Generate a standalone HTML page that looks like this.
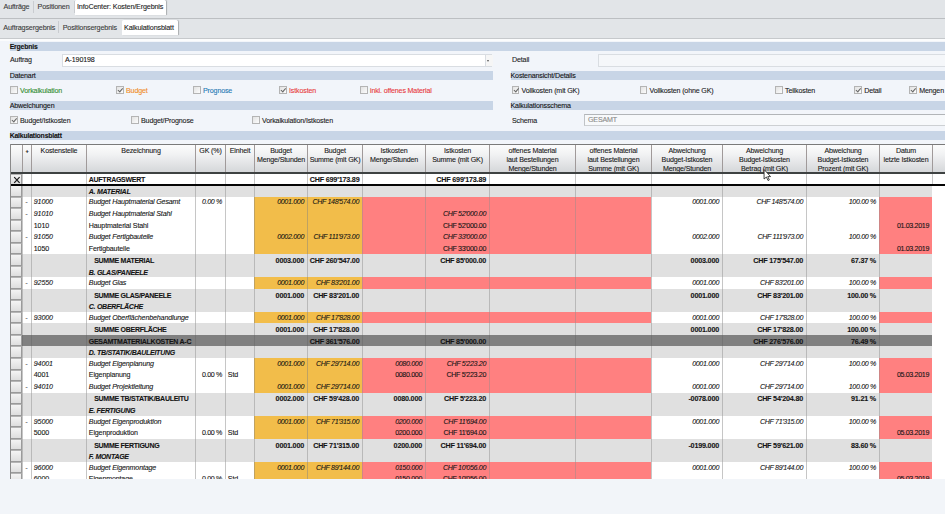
<!DOCTYPE html>
<html><head><meta charset="utf-8">
<style>
html,body{margin:0;padding:0}
body{width:945px;height:514px;overflow:hidden;position:relative;background:#f2f5fa;font-family:"Liberation Sans",sans-serif;font-size:7.1px;letter-spacing:-0.15px;color:#141414;-webkit-text-stroke:0.1px currentColor}
.abs{position:absolute}
#tb1{left:0;top:0;width:945px;height:18px;background:#e2e5e8}
#ln1{left:0;top:17.5px;width:945px;height:1.5px;background:#bcbfc2}
#tb2{left:0;top:18.5px;width:945px;height:19px;background:#e2e5e8}
#ln2{left:0;top:37.5px;width:945px;height:1.3px;background:#c6c9cc}
#ln2b{left:0;top:39px;width:945px;height:1.5px;background:#fbfcfd}
.tab{position:absolute;white-space:nowrap;color:#3a3a3a;font-size:7.2px;line-height:10px}
.tabact{position:absolute;background:#fff;border-radius:1.5px 1.5px 0 0;box-shadow:1px 0 1px rgba(0,0,0,.25)}
.tsep{position:absolute;width:1px;background:#c9ccd0}
.band{position:absolute;height:8.8px;background:#c8d5e6;font-size:7.1px;line-height:10.2px;white-space:nowrap;color:#111}
.band b{font-weight:bold;font-size:6.9px;letter-spacing:-0.2px}
.lbl{position:absolute;white-space:nowrap;font-size:7.1px;line-height:10px;color:#1a1a1a}
.inp{position:absolute;background:#fff;border:1px solid #d9dde2;box-sizing:border-box;font-size:7.1px;line-height:10px;white-space:nowrap}
.cb{position:absolute;width:7.6px;height:7.6px;box-sizing:border-box;border:1px solid #b4b4b4;background:linear-gradient(135deg,#e2e2e2,#fcfcfc)}
.cb.on:after{content:"";position:absolute;left:2px;top:0.2px;width:1.6px;height:3.6px;border:solid #666;border-width:0 0.9px 0.9px 0;transform:rotate(40deg)}
/* table */
#thead{position:absolute;left:0;top:144px;width:945px;height:29.5px}
.h{position:absolute;top:0;height:29.5px;box-sizing:border-box;border-left:1px solid #a09a9a;background:linear-gradient(#fdfdfd 0%,#f1f2f3 35%,#d2d4d7 100%);text-align:center;font-size:7.1px;line-height:8.85px;padding-top:3.1px;white-space:nowrap;overflow:hidden;color:#181818}
.row{position:absolute;left:0;width:945px}
.c{position:absolute;top:0;height:100%;box-sizing:border-box;border-left:1px solid #c6c6c6;white-space:nowrap;overflow:hidden;font-size:7.1px;line-height:11.5px;padding:0.9px 3px 0 1.8px}
.ar{text-align:right}.al{text-align:left}
.w{background:#fff}
.x{background:#fff;border-left-color:#fff}
.k-aw .x{border-left-color:#c6c6c6}
.g{background:#e0e0e0;border-left-color:#b9b9b9}
.d{background:#808080;border-left-color:#747474}
.o{background:#f2bd4a;border-left-color:#bfa262}
.r{background:#ff8080;border-left-color:#cf8585}
.k-bud .c{font-style:italic}
.k-sum .c,.k-tot .c,.k-aw .c{font-weight:bold;font-size:6.9px;letter-spacing:-0.2px}
.k-grp .c{font-weight:bold;font-style:italic;font-size:6.9px;letter-spacing:-0.2px}
.k-aw .c{line-height:11.5px}
.k-sum .ind{padding-left:7.2px}
.c.n{letter-spacing:-0.34px}
.k-sum .c.n,.k-tot .c.n,.k-aw .c.n{font-size:7.2px;letter-spacing:-0.2px}
.k-sum .c.al,.k-tot .c.al,.k-aw .c.al,.k-grp .c.al{font-size:7px;letter-spacing:-0.27px}
.rh{position:absolute;top:0;height:100%;box-sizing:border-box;border:1px solid #9a9a9a;border-top-color:#b5b5b5;background:linear-gradient(#f4f4f4,#dedede)}
</style></head><body>
<div id="tb1" class="abs"></div><div id="ln1" class="abs"></div>
<div id="tb2" class="abs"></div><div id="ln2" class="abs"></div><div id="ln2b" class="abs"></div>

<div class="tabact" style="left:75px;top:0;width:90.5px;height:14.5px"></div>
<div class="tab" style="left:3.5px;top:2px">Aufträge</div>
<div class="tsep" style="left:33px;top:1px;height:12px"></div>
<div class="tab" style="left:37.5px;top:2px">Positionen</div>
<div class="tsep" style="left:73.5px;top:1px;height:12px"></div>
<div class="tab" style="left:77px;top:2px;color:#222">InfoCenter: Kosten/Ergebnis</div>

<div class="tabact" style="left:121.5px;top:20px;width:56px;height:14.5px"></div>
<div class="tab" style="left:3.3px;top:22.5px">Auftragsergebnis</div>
<div class="tsep" style="left:58px;top:21px;height:12px"></div>
<div class="tab" style="left:62.7px;top:22.5px">Positionsergebnis</div>
<div class="tab" style="left:124px;top:22.5px;color:#222">Kalkulationsblatt</div>

<div class="band" style="left:9.7px;top:42px;width:936px"><b>Ergebnis</b></div>
<div class="lbl" style="left:10px;top:54.8px">Auftrag</div>
<div class="inp" style="left:62px;top:54.3px;width:430px;height:12.3px;padding-left:2px;line-height:10.5px">A-190198</div>
<div class="abs" style="left:484.5px;top:55px;width:7px;height:10.5px;border-left:1px solid #d9dde2;background:#f6f6f6"></div>
<div class="abs" style="left:486.5px;top:59.5px;width:0;height:0;border:1.5px solid transparent;border-top:2px solid #555"></div>
<div class="lbl" style="left:512px;top:54.8px">Detail</div>
<div class="inp" style="left:598px;top:54.3px;width:360px;height:12.3px;background:#f5f7fa"></div>

<div class="band" style="left:9.7px;top:71.2px;width:483px">Datenart</div>
<div class="band" style="left:510.5px;top:71.2px;width:440px">Kostenansicht/Details</div>

<i class="cb" style="left:10px;top:86.3px"></i><div class="lbl" style="left:20px;top:85.5px;color:#2e8b2e">Vorkalkulation</div>
<i class="cb on" style="left:116px;top:86.3px"></i><div class="lbl" style="left:126px;top:85.5px;color:#f08a1c">Budget</div>
<i class="cb" style="left:193px;top:86.3px"></i><div class="lbl" style="left:203px;top:85.5px;color:#1e78b4">Prognose</div>
<i class="cb on" style="left:279px;top:86.3px"></i><div class="lbl" style="left:289px;top:85.5px;color:#e8383a">Istkosten</div>
<i class="cb" style="left:360px;top:86.3px"></i><div class="lbl" style="left:370px;top:85.5px;color:#e8383a">inkl. offenes Material</div>

<i class="cb on" style="left:511.5px;top:86.3px"></i><div class="lbl" style="left:521.5px;top:85.5px">Vollkosten (mit GK)</div>
<i class="cb" style="left:639.5px;top:86.3px"></i><div class="lbl" style="left:649.5px;top:85.5px">Vollkosten (ohne GK)</div>
<i class="cb" style="left:775px;top:86.3px"></i><div class="lbl" style="left:785px;top:85.5px">Teilkosten</div>
<i class="cb on" style="left:854px;top:86.3px"></i><div class="lbl" style="left:864.2px;top:85.5px">Detail</div>
<i class="cb on" style="left:909px;top:86.3px"></i><div class="lbl" style="left:919.2px;top:85.5px">Mengen</div>

<div class="band" style="left:9.7px;top:101.2px;width:483px">Abweichungen</div>
<div class="band" style="left:510.5px;top:101.2px;width:440px">Kalkulationsschema</div>

<i class="cb on" style="left:10px;top:116.3px"></i><div class="lbl" style="left:20px;top:115.5px">Budget/Istkosten</div>
<i class="cb" style="left:131px;top:116.3px"></i><div class="lbl" style="left:141px;top:115.5px">Budget/Prognose</div>
<i class="cb" style="left:252px;top:116.3px"></i><div class="lbl" style="left:262px;top:115.5px">Vorkalkulation/Istkosten</div>
<div class="lbl" style="left:512px;top:115.5px">Schema</div>
<div class="inp" style="left:584px;top:113.5px;width:380px;height:12.5px;padding-left:3px;color:#8a8a8a;border-color:#b2b5b8 #d0d3d6 #cdd0d3 #c0c3c6;background:#f7f9fb">GESAMT</div>

<div class="band" style="left:9.7px;top:131.2px;width:936px"><b>Kalkulationsblatt</b></div>

<!-- table -->
<div class="abs" style="left:10px;top:143.5px;width:935px;height:335px;background:#fff"></div>
<div id="thead">
<span class="h" style="left:10px;width:12px"></span>
<span class="h" style="left:22px;width:9px"><b style="font-size:5.5px">+</b></span>
<span class="h" style="left:31px;width:55px">Kostenstelle</span>
<span class="h" style="left:86px;width:109px">Bezeichnung</span>
<span class="h" style="left:195px;width:30px">GK (%)</span>
<span class="h" style="left:225px;width:29px">Einheit</span>
<span class="h" style="left:254px;width:53px">Budget<br>Menge/Stunden</span>
<span class="h" style="left:307px;width:55px">Budget<br>Summe (mit GK)</span>
<span class="h" style="left:362px;width:63px">Istkosten<br>Menge/Stunden</span>
<span class="h" style="left:425px;width:64px">Istkosten<br>Summe (mit GK)</span>
<span class="h" style="left:489px;width:86px">offenes Material<br>laut Bestellungen<br>Menge/Stunden</span>
<span class="h" style="left:575px;width:76px">offenes Material<br>laut Bestellungen<br>Summe (mit GK)</span>
<span class="h" style="left:651px;width:71px">Abweichung<br>Budget-Istkosten<br>Menge/Stunden</span>
<span class="h" style="left:722px;width:84px">Abweichung<br>Budget-Istkosten<br>Betrag (mit GK)</span>
<span class="h" style="left:806px;width:73px">Abweichung<br>Budget-Istkosten<br>Prozent (mit GK)</span>
<span class="h" style="left:879px;width:53px">Datum<br>letzte Istkosten</span>
<span class="h" style="left:932px;width:28px"></span>
</div>
<div class="row k-aw" style="top:173.5px;height:11.5px">
<i class="rh" style="left:10px;width:12px"></i>
<span class="c w" style="left:22px;width:9px;text-align:center"></span>
<span class="c w al" style="left:31px;width:55px"></span>
<span class="c w al" style="left:86px;width:109px">AUFTRAGSWERT</span>
<span class="c w ar n" style="left:195px;width:30px"></span>
<span class="c w al" style="left:225px;width:29px"></span>
<span class="c w ar n" style="left:254px;width:53px"></span>
<span class="c w ar n" style="left:307px;width:55px">CHF 699'173.89</span>
<span class="c w ar n" style="left:362px;width:63px"></span>
<span class="c w ar n" style="left:425px;width:64px">CHF 699'173.89</span>
<span class="c w ar n" style="left:489px;width:86px"></span>
<span class="c w ar n" style="left:575px;width:76px"></span>
<span class="c w ar n" style="left:651px;width:71px"></span>
<span class="c w ar n" style="left:722px;width:84px"></span>
<span class="c w ar n" style="left:806px;width:73px"></span>
<span class="c w ar n" style="left:879px;width:53px"></span>
<span class="c x al" style="left:932px;width:28px"></span>
</div>
<div class="row k-grp" style="top:185px;height:11.57px">
<i class="rh" style="left:10px;width:12px"></i>
<span class="c g" style="left:22px;width:9px;text-align:center"></span>
<span class="c g al" style="left:31px;width:55px"></span>
<span class="c g al" style="left:86px;width:109px">A. MATERIAL</span>
<span class="c g ar n" style="left:195px;width:30px"></span>
<span class="c g al" style="left:225px;width:29px"></span>
<span class="c g ar n" style="left:254px;width:53px"></span>
<span class="c g ar n" style="left:307px;width:55px"></span>
<span class="c g ar n" style="left:362px;width:63px"></span>
<span class="c g ar n" style="left:425px;width:64px"></span>
<span class="c g ar n" style="left:489px;width:86px"></span>
<span class="c g ar n" style="left:575px;width:76px"></span>
<span class="c g ar n" style="left:651px;width:71px"></span>
<span class="c g ar n" style="left:722px;width:84px"></span>
<span class="c g ar n" style="left:806px;width:73px"></span>
<span class="c g ar n" style="left:879px;width:53px"></span>
<span class="c x al" style="left:932px;width:28px"></span>
</div>
<div class="row k-bud" style="top:196.55px;height:11.55px">
<i class="rh" style="left:10px;width:12px"></i>
<span class="c w" style="left:22px;width:9px;text-align:center">-</span>
<span class="c w al" style="left:31px;width:55px">91000</span>
<span class="c w al" style="left:86px;width:109px">Budget Hauptmaterial Gesamt</span>
<span class="c w ar n" style="left:195px;width:30px">0.00 %</span>
<span class="c w al" style="left:225px;width:29px"></span>
<span class="c o ar n" style="left:254px;width:53px">0001.000</span>
<span class="c o ar n" style="left:307px;width:55px">CHF 148'574.00</span>
<span class="c r ar n" style="left:362px;width:63px"></span>
<span class="c r ar n" style="left:425px;width:64px"></span>
<span class="c r ar n" style="left:489px;width:86px"></span>
<span class="c r ar n" style="left:575px;width:76px"></span>
<span class="c w ar n" style="left:651px;width:71px">0001.000</span>
<span class="c w ar n" style="left:722px;width:84px">CHF 148'574.00</span>
<span class="c w ar n" style="left:806px;width:73px">100.00 %</span>
<span class="c r ar n" style="left:879px;width:53px"></span>
<span class="c x al" style="left:932px;width:28px"></span>
</div>
<div class="row k-bud" style="top:208.08px;height:11.55px">
<i class="rh" style="left:10px;width:12px"></i>
<span class="c w" style="left:22px;width:9px;text-align:center">-</span>
<span class="c w al" style="left:31px;width:55px">91010</span>
<span class="c w al" style="left:86px;width:109px">Budget Hauptmaterial Stahl</span>
<span class="c w ar n" style="left:195px;width:30px"></span>
<span class="c w al" style="left:225px;width:29px"></span>
<span class="c o ar n" style="left:254px;width:53px"></span>
<span class="c o ar n" style="left:307px;width:55px"></span>
<span class="c r ar n" style="left:362px;width:63px"></span>
<span class="c r ar n" style="left:425px;width:64px">CHF 52'000.00</span>
<span class="c r ar n" style="left:489px;width:86px"></span>
<span class="c r ar n" style="left:575px;width:76px"></span>
<span class="c w ar n" style="left:651px;width:71px"></span>
<span class="c w ar n" style="left:722px;width:84px"></span>
<span class="c w ar n" style="left:806px;width:73px"></span>
<span class="c r ar n" style="left:879px;width:53px"></span>
<span class="c x al" style="left:932px;width:28px"></span>
</div>
<div class="row k-det" style="top:219.61px;height:11.55px">
<i class="rh" style="left:10px;width:12px"></i>
<span class="c w" style="left:22px;width:9px;text-align:center"></span>
<span class="c w al" style="left:31px;width:55px">1010</span>
<span class="c w al" style="left:86px;width:109px">Hauptmaterial Stahl</span>
<span class="c w ar n" style="left:195px;width:30px"></span>
<span class="c w al" style="left:225px;width:29px"></span>
<span class="c o ar n" style="left:254px;width:53px"></span>
<span class="c o ar n" style="left:307px;width:55px"></span>
<span class="c r ar n" style="left:362px;width:63px"></span>
<span class="c r ar n" style="left:425px;width:64px">CHF 52'000.00</span>
<span class="c r ar n" style="left:489px;width:86px"></span>
<span class="c r ar n" style="left:575px;width:76px"></span>
<span class="c w ar n" style="left:651px;width:71px"></span>
<span class="c w ar n" style="left:722px;width:84px"></span>
<span class="c w ar n" style="left:806px;width:73px"></span>
<span class="c r ar n" style="left:879px;width:53px">01.03.2019</span>
<span class="c x al" style="left:932px;width:28px"></span>
</div>
<div class="row k-bud" style="top:231.14px;height:11.55px">
<i class="rh" style="left:10px;width:12px"></i>
<span class="c w" style="left:22px;width:9px;text-align:center">-</span>
<span class="c w al" style="left:31px;width:55px">91050</span>
<span class="c w al" style="left:86px;width:109px">Budget Fertigbauteile</span>
<span class="c w ar n" style="left:195px;width:30px"></span>
<span class="c w al" style="left:225px;width:29px"></span>
<span class="c o ar n" style="left:254px;width:53px">0002.000</span>
<span class="c o ar n" style="left:307px;width:55px">CHF 111'973.00</span>
<span class="c r ar n" style="left:362px;width:63px"></span>
<span class="c r ar n" style="left:425px;width:64px">CHF 33'000.00</span>
<span class="c r ar n" style="left:489px;width:86px"></span>
<span class="c r ar n" style="left:575px;width:76px"></span>
<span class="c w ar n" style="left:651px;width:71px">0002.000</span>
<span class="c w ar n" style="left:722px;width:84px">CHF 111'973.00</span>
<span class="c w ar n" style="left:806px;width:73px">100.00 %</span>
<span class="c r ar n" style="left:879px;width:53px"></span>
<span class="c x al" style="left:932px;width:28px"></span>
</div>
<div class="row k-det" style="top:242.67px;height:11.55px">
<i class="rh" style="left:10px;width:12px"></i>
<span class="c w" style="left:22px;width:9px;text-align:center"></span>
<span class="c w al" style="left:31px;width:55px">1050</span>
<span class="c w al" style="left:86px;width:109px">Fertigbauteile</span>
<span class="c w ar n" style="left:195px;width:30px"></span>
<span class="c w al" style="left:225px;width:29px"></span>
<span class="c o ar n" style="left:254px;width:53px"></span>
<span class="c o ar n" style="left:307px;width:55px"></span>
<span class="c r ar n" style="left:362px;width:63px"></span>
<span class="c r ar n" style="left:425px;width:64px">CHF 33'000.00</span>
<span class="c r ar n" style="left:489px;width:86px"></span>
<span class="c r ar n" style="left:575px;width:76px"></span>
<span class="c w ar n" style="left:651px;width:71px"></span>
<span class="c w ar n" style="left:722px;width:84px"></span>
<span class="c w ar n" style="left:806px;width:73px"></span>
<span class="c r ar n" style="left:879px;width:53px">01.03.2019</span>
<span class="c x al" style="left:932px;width:28px"></span>
</div>
<div class="row k-sum" style="top:254.2px;height:11.55px">
<i class="rh" style="left:10px;width:12px"></i>
<span class="c g" style="left:22px;width:9px;text-align:center"></span>
<span class="c g al" style="left:31px;width:55px"></span>
<span class="c g al ind" style="left:86px;width:109px">SUMME MATERIAL</span>
<span class="c g ar n" style="left:195px;width:30px"></span>
<span class="c g al" style="left:225px;width:29px"></span>
<span class="c g ar n" style="left:254px;width:53px">0003.000</span>
<span class="c g ar n" style="left:307px;width:55px">CHF 260'547.00</span>
<span class="c g ar n" style="left:362px;width:63px"></span>
<span class="c g ar n" style="left:425px;width:64px">CHF 85'000.00</span>
<span class="c g ar n" style="left:489px;width:86px"></span>
<span class="c g ar n" style="left:575px;width:76px"></span>
<span class="c g ar n" style="left:651px;width:71px">0003.000</span>
<span class="c g ar n" style="left:722px;width:84px">CHF 175'547.00</span>
<span class="c g ar n" style="left:806px;width:73px">67.37 %</span>
<span class="c g ar n" style="left:879px;width:53px"></span>
<span class="c x al" style="left:932px;width:28px"></span>
</div>
<div class="row k-grp" style="top:265.73px;height:11.55px">
<i class="rh" style="left:10px;width:12px"></i>
<span class="c g" style="left:22px;width:9px;text-align:center"></span>
<span class="c g al" style="left:31px;width:55px"></span>
<span class="c g al" style="left:86px;width:109px">B. GLAS/PANEELE</span>
<span class="c g ar n" style="left:195px;width:30px"></span>
<span class="c g al" style="left:225px;width:29px"></span>
<span class="c g ar n" style="left:254px;width:53px"></span>
<span class="c g ar n" style="left:307px;width:55px"></span>
<span class="c g ar n" style="left:362px;width:63px"></span>
<span class="c g ar n" style="left:425px;width:64px"></span>
<span class="c g ar n" style="left:489px;width:86px"></span>
<span class="c g ar n" style="left:575px;width:76px"></span>
<span class="c g ar n" style="left:651px;width:71px"></span>
<span class="c g ar n" style="left:722px;width:84px"></span>
<span class="c g ar n" style="left:806px;width:73px"></span>
<span class="c g ar n" style="left:879px;width:53px"></span>
<span class="c x al" style="left:932px;width:28px"></span>
</div>
<div class="row k-bud" style="top:277.26px;height:11.55px">
<i class="rh" style="left:10px;width:12px"></i>
<span class="c w" style="left:22px;width:9px;text-align:center">-</span>
<span class="c w al" style="left:31px;width:55px">92550</span>
<span class="c w al" style="left:86px;width:109px">Budget Glas</span>
<span class="c w ar n" style="left:195px;width:30px"></span>
<span class="c w al" style="left:225px;width:29px"></span>
<span class="c o ar n" style="left:254px;width:53px">0001.000</span>
<span class="c o ar n" style="left:307px;width:55px">CHF 83'201.00</span>
<span class="c r ar n" style="left:362px;width:63px"></span>
<span class="c r ar n" style="left:425px;width:64px"></span>
<span class="c r ar n" style="left:489px;width:86px"></span>
<span class="c r ar n" style="left:575px;width:76px"></span>
<span class="c w ar n" style="left:651px;width:71px">0001.000</span>
<span class="c w ar n" style="left:722px;width:84px">CHF 83'201.00</span>
<span class="c w ar n" style="left:806px;width:73px">100.00 %</span>
<span class="c r ar n" style="left:879px;width:53px"></span>
<span class="c x al" style="left:932px;width:28px"></span>
</div>
<div class="row k-sum" style="top:288.79px;height:11.55px">
<i class="rh" style="left:10px;width:12px"></i>
<span class="c g" style="left:22px;width:9px;text-align:center"></span>
<span class="c g al" style="left:31px;width:55px"></span>
<span class="c g al ind" style="left:86px;width:109px">SUMME GLAS/PANEELE</span>
<span class="c g ar n" style="left:195px;width:30px"></span>
<span class="c g al" style="left:225px;width:29px"></span>
<span class="c g ar n" style="left:254px;width:53px">0001.000</span>
<span class="c g ar n" style="left:307px;width:55px">CHF 83'201.00</span>
<span class="c g ar n" style="left:362px;width:63px"></span>
<span class="c g ar n" style="left:425px;width:64px"></span>
<span class="c g ar n" style="left:489px;width:86px"></span>
<span class="c g ar n" style="left:575px;width:76px"></span>
<span class="c g ar n" style="left:651px;width:71px">0001.000</span>
<span class="c g ar n" style="left:722px;width:84px">CHF 83'201.00</span>
<span class="c g ar n" style="left:806px;width:73px">100.00 %</span>
<span class="c g ar n" style="left:879px;width:53px"></span>
<span class="c x al" style="left:932px;width:28px"></span>
</div>
<div class="row k-grp" style="top:300.32px;height:11.55px">
<i class="rh" style="left:10px;width:12px"></i>
<span class="c g" style="left:22px;width:9px;text-align:center"></span>
<span class="c g al" style="left:31px;width:55px"></span>
<span class="c g al" style="left:86px;width:109px">C. OBERFLÄCHE</span>
<span class="c g ar n" style="left:195px;width:30px"></span>
<span class="c g al" style="left:225px;width:29px"></span>
<span class="c g ar n" style="left:254px;width:53px"></span>
<span class="c g ar n" style="left:307px;width:55px"></span>
<span class="c g ar n" style="left:362px;width:63px"></span>
<span class="c g ar n" style="left:425px;width:64px"></span>
<span class="c g ar n" style="left:489px;width:86px"></span>
<span class="c g ar n" style="left:575px;width:76px"></span>
<span class="c g ar n" style="left:651px;width:71px"></span>
<span class="c g ar n" style="left:722px;width:84px"></span>
<span class="c g ar n" style="left:806px;width:73px"></span>
<span class="c g ar n" style="left:879px;width:53px"></span>
<span class="c x al" style="left:932px;width:28px"></span>
</div>
<div class="row k-bud" style="top:311.85px;height:11.55px">
<i class="rh" style="left:10px;width:12px"></i>
<span class="c w" style="left:22px;width:9px;text-align:center">-</span>
<span class="c w al" style="left:31px;width:55px">93000</span>
<span class="c w al" style="left:86px;width:109px">Budget Oberflächenbehandlunge</span>
<span class="c w ar n" style="left:195px;width:30px"></span>
<span class="c w al" style="left:225px;width:29px"></span>
<span class="c o ar n" style="left:254px;width:53px">0001.000</span>
<span class="c o ar n" style="left:307px;width:55px">CHF 17'828.00</span>
<span class="c r ar n" style="left:362px;width:63px"></span>
<span class="c r ar n" style="left:425px;width:64px"></span>
<span class="c r ar n" style="left:489px;width:86px"></span>
<span class="c r ar n" style="left:575px;width:76px"></span>
<span class="c w ar n" style="left:651px;width:71px">0001.000</span>
<span class="c w ar n" style="left:722px;width:84px">CHF 17'828.00</span>
<span class="c w ar n" style="left:806px;width:73px">100.00 %</span>
<span class="c r ar n" style="left:879px;width:53px"></span>
<span class="c x al" style="left:932px;width:28px"></span>
</div>
<div class="row k-sum" style="top:323.38px;height:11.55px">
<i class="rh" style="left:10px;width:12px"></i>
<span class="c g" style="left:22px;width:9px;text-align:center"></span>
<span class="c g al" style="left:31px;width:55px"></span>
<span class="c g al ind" style="left:86px;width:109px">SUMME OBERFLÄCHE</span>
<span class="c g ar n" style="left:195px;width:30px"></span>
<span class="c g al" style="left:225px;width:29px"></span>
<span class="c g ar n" style="left:254px;width:53px">0001.000</span>
<span class="c g ar n" style="left:307px;width:55px">CHF 17'828.00</span>
<span class="c g ar n" style="left:362px;width:63px"></span>
<span class="c g ar n" style="left:425px;width:64px"></span>
<span class="c g ar n" style="left:489px;width:86px"></span>
<span class="c g ar n" style="left:575px;width:76px"></span>
<span class="c g ar n" style="left:651px;width:71px">0001.000</span>
<span class="c g ar n" style="left:722px;width:84px">CHF 17'828.00</span>
<span class="c g ar n" style="left:806px;width:73px">100.00 %</span>
<span class="c g ar n" style="left:879px;width:53px"></span>
<span class="c x al" style="left:932px;width:28px"></span>
</div>
<div class="row k-tot" style="top:334.91px;height:11.55px">
<i class="rh" style="left:10px;width:12px"></i>
<span class="c d" style="left:22px;width:9px;text-align:center"></span>
<span class="c d al" style="left:31px;width:55px"></span>
<span class="c d al" style="left:86px;width:109px">GESAMTMATERIALKOSTEN A-C</span>
<span class="c d ar n" style="left:195px;width:30px"></span>
<span class="c d al" style="left:225px;width:29px"></span>
<span class="c d ar n" style="left:254px;width:53px"></span>
<span class="c d ar n" style="left:307px;width:55px">CHF 361'576.00</span>
<span class="c d ar n" style="left:362px;width:63px"></span>
<span class="c d ar n" style="left:425px;width:64px">CHF 85'000.00</span>
<span class="c d ar n" style="left:489px;width:86px"></span>
<span class="c d ar n" style="left:575px;width:76px"></span>
<span class="c d ar n" style="left:651px;width:71px"></span>
<span class="c d ar n" style="left:722px;width:84px">CHF 276'576.00</span>
<span class="c d ar n" style="left:806px;width:73px">76.49 %</span>
<span class="c d ar n" style="left:879px;width:53px"></span>
<span class="c x al" style="left:932px;width:28px"></span>
</div>
<div class="row k-grp" style="top:346.44px;height:11.55px">
<i class="rh" style="left:10px;width:12px"></i>
<span class="c g" style="left:22px;width:9px;text-align:center"></span>
<span class="c g al" style="left:31px;width:55px"></span>
<span class="c g al" style="left:86px;width:109px">D. TB/STATIK/BAULEITUNG</span>
<span class="c g ar n" style="left:195px;width:30px"></span>
<span class="c g al" style="left:225px;width:29px"></span>
<span class="c g ar n" style="left:254px;width:53px"></span>
<span class="c g ar n" style="left:307px;width:55px"></span>
<span class="c g ar n" style="left:362px;width:63px"></span>
<span class="c g ar n" style="left:425px;width:64px"></span>
<span class="c g ar n" style="left:489px;width:86px"></span>
<span class="c g ar n" style="left:575px;width:76px"></span>
<span class="c g ar n" style="left:651px;width:71px"></span>
<span class="c g ar n" style="left:722px;width:84px"></span>
<span class="c g ar n" style="left:806px;width:73px"></span>
<span class="c g ar n" style="left:879px;width:53px"></span>
<span class="c x al" style="left:932px;width:28px"></span>
</div>
<div class="row k-bud" style="top:357.97px;height:11.55px">
<i class="rh" style="left:10px;width:12px"></i>
<span class="c w" style="left:22px;width:9px;text-align:center">-</span>
<span class="c w al" style="left:31px;width:55px">94001</span>
<span class="c w al" style="left:86px;width:109px">Budget Eigenplanung</span>
<span class="c w ar n" style="left:195px;width:30px"></span>
<span class="c w al" style="left:225px;width:29px"></span>
<span class="c o ar n" style="left:254px;width:53px">0001.000</span>
<span class="c o ar n" style="left:307px;width:55px">CHF 29'714.00</span>
<span class="c r ar n" style="left:362px;width:63px">0080.000</span>
<span class="c r ar n" style="left:425px;width:64px">CHF 5'223.20</span>
<span class="c r ar n" style="left:489px;width:86px"></span>
<span class="c r ar n" style="left:575px;width:76px"></span>
<span class="c w ar n" style="left:651px;width:71px">0001.000</span>
<span class="c w ar n" style="left:722px;width:84px">CHF 29'714.00</span>
<span class="c w ar n" style="left:806px;width:73px">100.00 %</span>
<span class="c r ar n" style="left:879px;width:53px"></span>
<span class="c x al" style="left:932px;width:28px"></span>
</div>
<div class="row k-det" style="top:369.5px;height:11.55px">
<i class="rh" style="left:10px;width:12px"></i>
<span class="c w" style="left:22px;width:9px;text-align:center"></span>
<span class="c w al" style="left:31px;width:55px">4001</span>
<span class="c w al" style="left:86px;width:109px">Eigenplanung</span>
<span class="c w ar n" style="left:195px;width:30px">0.00 %</span>
<span class="c w al" style="left:225px;width:29px">Std</span>
<span class="c o ar n" style="left:254px;width:53px"></span>
<span class="c o ar n" style="left:307px;width:55px"></span>
<span class="c r ar n" style="left:362px;width:63px">0080.000</span>
<span class="c r ar n" style="left:425px;width:64px">CHF 5'223.20</span>
<span class="c r ar n" style="left:489px;width:86px"></span>
<span class="c r ar n" style="left:575px;width:76px"></span>
<span class="c w ar n" style="left:651px;width:71px"></span>
<span class="c w ar n" style="left:722px;width:84px"></span>
<span class="c w ar n" style="left:806px;width:73px"></span>
<span class="c r ar n" style="left:879px;width:53px">05.03.2019</span>
<span class="c x al" style="left:932px;width:28px"></span>
</div>
<div class="row k-bud" style="top:381.03px;height:11.55px">
<i class="rh" style="left:10px;width:12px"></i>
<span class="c w" style="left:22px;width:9px;text-align:center">-</span>
<span class="c w al" style="left:31px;width:55px">94010</span>
<span class="c w al" style="left:86px;width:109px">Budget Projektleitung</span>
<span class="c w ar n" style="left:195px;width:30px"></span>
<span class="c w al" style="left:225px;width:29px"></span>
<span class="c o ar n" style="left:254px;width:53px">0001.000</span>
<span class="c o ar n" style="left:307px;width:55px">CHF 29'714.00</span>
<span class="c r ar n" style="left:362px;width:63px"></span>
<span class="c r ar n" style="left:425px;width:64px"></span>
<span class="c r ar n" style="left:489px;width:86px"></span>
<span class="c r ar n" style="left:575px;width:76px"></span>
<span class="c w ar n" style="left:651px;width:71px">0001.000</span>
<span class="c w ar n" style="left:722px;width:84px">CHF 29'714.00</span>
<span class="c w ar n" style="left:806px;width:73px">100.00 %</span>
<span class="c r ar n" style="left:879px;width:53px"></span>
<span class="c x al" style="left:932px;width:28px"></span>
</div>
<div class="row k-sum" style="top:392.56px;height:11.55px">
<i class="rh" style="left:10px;width:12px"></i>
<span class="c g" style="left:22px;width:9px;text-align:center"></span>
<span class="c g al" style="left:31px;width:55px"></span>
<span class="c g al ind" style="left:86px;width:109px">SUMME TB/STATIK/BAULEITU</span>
<span class="c g ar n" style="left:195px;width:30px"></span>
<span class="c g al" style="left:225px;width:29px"></span>
<span class="c g ar n" style="left:254px;width:53px">0002.000</span>
<span class="c g ar n" style="left:307px;width:55px">CHF 59'428.00</span>
<span class="c g ar n" style="left:362px;width:63px">0080.000</span>
<span class="c g ar n" style="left:425px;width:64px">CHF 5'223.20</span>
<span class="c g ar n" style="left:489px;width:86px"></span>
<span class="c g ar n" style="left:575px;width:76px"></span>
<span class="c g ar n" style="left:651px;width:71px">-0078.000</span>
<span class="c g ar n" style="left:722px;width:84px">CHF 54'204.80</span>
<span class="c g ar n" style="left:806px;width:73px">91.21 %</span>
<span class="c g ar n" style="left:879px;width:53px"></span>
<span class="c x al" style="left:932px;width:28px"></span>
</div>
<div class="row k-grp" style="top:404.09px;height:11.55px">
<i class="rh" style="left:10px;width:12px"></i>
<span class="c g" style="left:22px;width:9px;text-align:center"></span>
<span class="c g al" style="left:31px;width:55px"></span>
<span class="c g al" style="left:86px;width:109px">E. FERTIGUNG</span>
<span class="c g ar n" style="left:195px;width:30px"></span>
<span class="c g al" style="left:225px;width:29px"></span>
<span class="c g ar n" style="left:254px;width:53px"></span>
<span class="c g ar n" style="left:307px;width:55px"></span>
<span class="c g ar n" style="left:362px;width:63px"></span>
<span class="c g ar n" style="left:425px;width:64px"></span>
<span class="c g ar n" style="left:489px;width:86px"></span>
<span class="c g ar n" style="left:575px;width:76px"></span>
<span class="c g ar n" style="left:651px;width:71px"></span>
<span class="c g ar n" style="left:722px;width:84px"></span>
<span class="c g ar n" style="left:806px;width:73px"></span>
<span class="c g ar n" style="left:879px;width:53px"></span>
<span class="c x al" style="left:932px;width:28px"></span>
</div>
<div class="row k-bud" style="top:415.62px;height:11.55px">
<i class="rh" style="left:10px;width:12px"></i>
<span class="c w" style="left:22px;width:9px;text-align:center">-</span>
<span class="c w al" style="left:31px;width:55px">95000</span>
<span class="c w al" style="left:86px;width:109px">Budget Eigenproduktion</span>
<span class="c w ar n" style="left:195px;width:30px"></span>
<span class="c w al" style="left:225px;width:29px"></span>
<span class="c o ar n" style="left:254px;width:53px">0001.000</span>
<span class="c o ar n" style="left:307px;width:55px">CHF 71'315.00</span>
<span class="c r ar n" style="left:362px;width:63px">0200.000</span>
<span class="c r ar n" style="left:425px;width:64px">CHF 11'694.00</span>
<span class="c r ar n" style="left:489px;width:86px"></span>
<span class="c r ar n" style="left:575px;width:76px"></span>
<span class="c w ar n" style="left:651px;width:71px">0001.000</span>
<span class="c w ar n" style="left:722px;width:84px">CHF 71'315.00</span>
<span class="c w ar n" style="left:806px;width:73px">100.00 %</span>
<span class="c r ar n" style="left:879px;width:53px"></span>
<span class="c x al" style="left:932px;width:28px"></span>
</div>
<div class="row k-det" style="top:427.15px;height:11.55px">
<i class="rh" style="left:10px;width:12px"></i>
<span class="c w" style="left:22px;width:9px;text-align:center"></span>
<span class="c w al" style="left:31px;width:55px">5000</span>
<span class="c w al" style="left:86px;width:109px">Eigenproduktion</span>
<span class="c w ar n" style="left:195px;width:30px">0.00 %</span>
<span class="c w al" style="left:225px;width:29px">Std</span>
<span class="c o ar n" style="left:254px;width:53px"></span>
<span class="c o ar n" style="left:307px;width:55px"></span>
<span class="c r ar n" style="left:362px;width:63px">0200.000</span>
<span class="c r ar n" style="left:425px;width:64px">CHF 11'694.00</span>
<span class="c r ar n" style="left:489px;width:86px"></span>
<span class="c r ar n" style="left:575px;width:76px"></span>
<span class="c w ar n" style="left:651px;width:71px"></span>
<span class="c w ar n" style="left:722px;width:84px"></span>
<span class="c w ar n" style="left:806px;width:73px"></span>
<span class="c r ar n" style="left:879px;width:53px">05.03.2019</span>
<span class="c x al" style="left:932px;width:28px"></span>
</div>
<div class="row k-sum" style="top:438.68px;height:11.55px">
<i class="rh" style="left:10px;width:12px"></i>
<span class="c g" style="left:22px;width:9px;text-align:center"></span>
<span class="c g al" style="left:31px;width:55px"></span>
<span class="c g al ind" style="left:86px;width:109px">SUMME FERTIGUNG</span>
<span class="c g ar n" style="left:195px;width:30px"></span>
<span class="c g al" style="left:225px;width:29px"></span>
<span class="c g ar n" style="left:254px;width:53px">0001.000</span>
<span class="c g ar n" style="left:307px;width:55px">CHF 71'315.00</span>
<span class="c g ar n" style="left:362px;width:63px">0200.000</span>
<span class="c g ar n" style="left:425px;width:64px">CHF 11'694.00</span>
<span class="c g ar n" style="left:489px;width:86px"></span>
<span class="c g ar n" style="left:575px;width:76px"></span>
<span class="c g ar n" style="left:651px;width:71px">-0199.000</span>
<span class="c g ar n" style="left:722px;width:84px">CHF 59'621.00</span>
<span class="c g ar n" style="left:806px;width:73px">83.60 %</span>
<span class="c g ar n" style="left:879px;width:53px"></span>
<span class="c x al" style="left:932px;width:28px"></span>
</div>
<div class="row k-grp" style="top:450.21px;height:11.55px">
<i class="rh" style="left:10px;width:12px"></i>
<span class="c g" style="left:22px;width:9px;text-align:center"></span>
<span class="c g al" style="left:31px;width:55px"></span>
<span class="c g al" style="left:86px;width:109px">F. MONTAGE</span>
<span class="c g ar n" style="left:195px;width:30px"></span>
<span class="c g al" style="left:225px;width:29px"></span>
<span class="c g ar n" style="left:254px;width:53px"></span>
<span class="c g ar n" style="left:307px;width:55px"></span>
<span class="c g ar n" style="left:362px;width:63px"></span>
<span class="c g ar n" style="left:425px;width:64px"></span>
<span class="c g ar n" style="left:489px;width:86px"></span>
<span class="c g ar n" style="left:575px;width:76px"></span>
<span class="c g ar n" style="left:651px;width:71px"></span>
<span class="c g ar n" style="left:722px;width:84px"></span>
<span class="c g ar n" style="left:806px;width:73px"></span>
<span class="c g ar n" style="left:879px;width:53px"></span>
<span class="c x al" style="left:932px;width:28px"></span>
</div>
<div class="row k-bud" style="top:461.74px;height:11.55px">
<i class="rh" style="left:10px;width:12px"></i>
<span class="c w" style="left:22px;width:9px;text-align:center">-</span>
<span class="c w al" style="left:31px;width:55px">96000</span>
<span class="c w al" style="left:86px;width:109px">Budget Eigenmontage</span>
<span class="c w ar n" style="left:195px;width:30px"></span>
<span class="c w al" style="left:225px;width:29px"></span>
<span class="c o ar n" style="left:254px;width:53px">0001.000</span>
<span class="c o ar n" style="left:307px;width:55px">CHF 89'144.00</span>
<span class="c r ar n" style="left:362px;width:63px">0150.000</span>
<span class="c r ar n" style="left:425px;width:64px">CHF 10'056.00</span>
<span class="c r ar n" style="left:489px;width:86px"></span>
<span class="c r ar n" style="left:575px;width:76px"></span>
<span class="c w ar n" style="left:651px;width:71px">0001.000</span>
<span class="c w ar n" style="left:722px;width:84px">CHF 89'144.00</span>
<span class="c w ar n" style="left:806px;width:73px">100.00 %</span>
<span class="c r ar n" style="left:879px;width:53px"></span>
<span class="c x al" style="left:932px;width:28px"></span>
</div>
<div class="row k-det" style="top:473.27px;height:11.55px">
<i class="rh" style="left:10px;width:12px"></i>
<span class="c w" style="left:22px;width:9px;text-align:center"></span>
<span class="c w al" style="left:31px;width:55px">6000</span>
<span class="c w al" style="left:86px;width:109px">Eigenmontage</span>
<span class="c w ar n" style="left:195px;width:30px">0.00 %</span>
<span class="c w al" style="left:225px;width:29px">Std</span>
<span class="c o ar n" style="left:254px;width:53px"></span>
<span class="c o ar n" style="left:307px;width:55px"></span>
<span class="c r ar n" style="left:362px;width:63px">0150.000</span>
<span class="c r ar n" style="left:425px;width:64px">CHF 10'056.00</span>
<span class="c r ar n" style="left:489px;width:86px"></span>
<span class="c r ar n" style="left:575px;width:76px"></span>
<span class="c w ar n" style="left:651px;width:71px"></span>
<span class="c w ar n" style="left:722px;width:84px"></span>
<span class="c w ar n" style="left:806px;width:73px"></span>
<span class="c r ar n" style="left:879px;width:53px">05.03.2019</span>
<span class="c x al" style="left:932px;width:28px"></span>
</div>
<div class="abs" style="left:10px;top:143.5px;width:935px;height:1.5px;background:#7a7a7a"></div>
<div class="abs" style="left:10px;top:172.2px;width:935px;height:1.8px;background:#3e4242"></div>
<div class="abs" style="left:10px;top:183.9px;width:935px;height:1.9px;background:#050505"></div>
<div class="abs" style="left:10px;top:143.5px;width:1px;height:335px;background:#8a8a8a"></div>
<!-- X icon -->
<svg class="abs" style="left:13px;top:175.5px" width="8" height="8" viewBox="0 0 8 8"><path d="M1.2 1.2 L6.6 6.8 M6.6 1.2 L1.2 6.8" stroke="#1a1a1a" stroke-width="1.2" fill="none"/></svg>
<!-- bottom cover -->
<div class="abs" style="left:0;top:479px;width:945px;height:35px;background:#f2f5f9"></div>
<!-- cursor -->
<svg class="abs" style="left:763px;top:168.6px" width="9.5" height="13.7" viewBox="0 0 9 13"><path d="M1 0.5 L1 9.5 L3.2 7.6 L4.8 11 L6 10.4 L4.5 7.2 L7.2 7.2 Z" fill="#fff" stroke="#222" stroke-width="0.8"/></svg>
</body></html>
